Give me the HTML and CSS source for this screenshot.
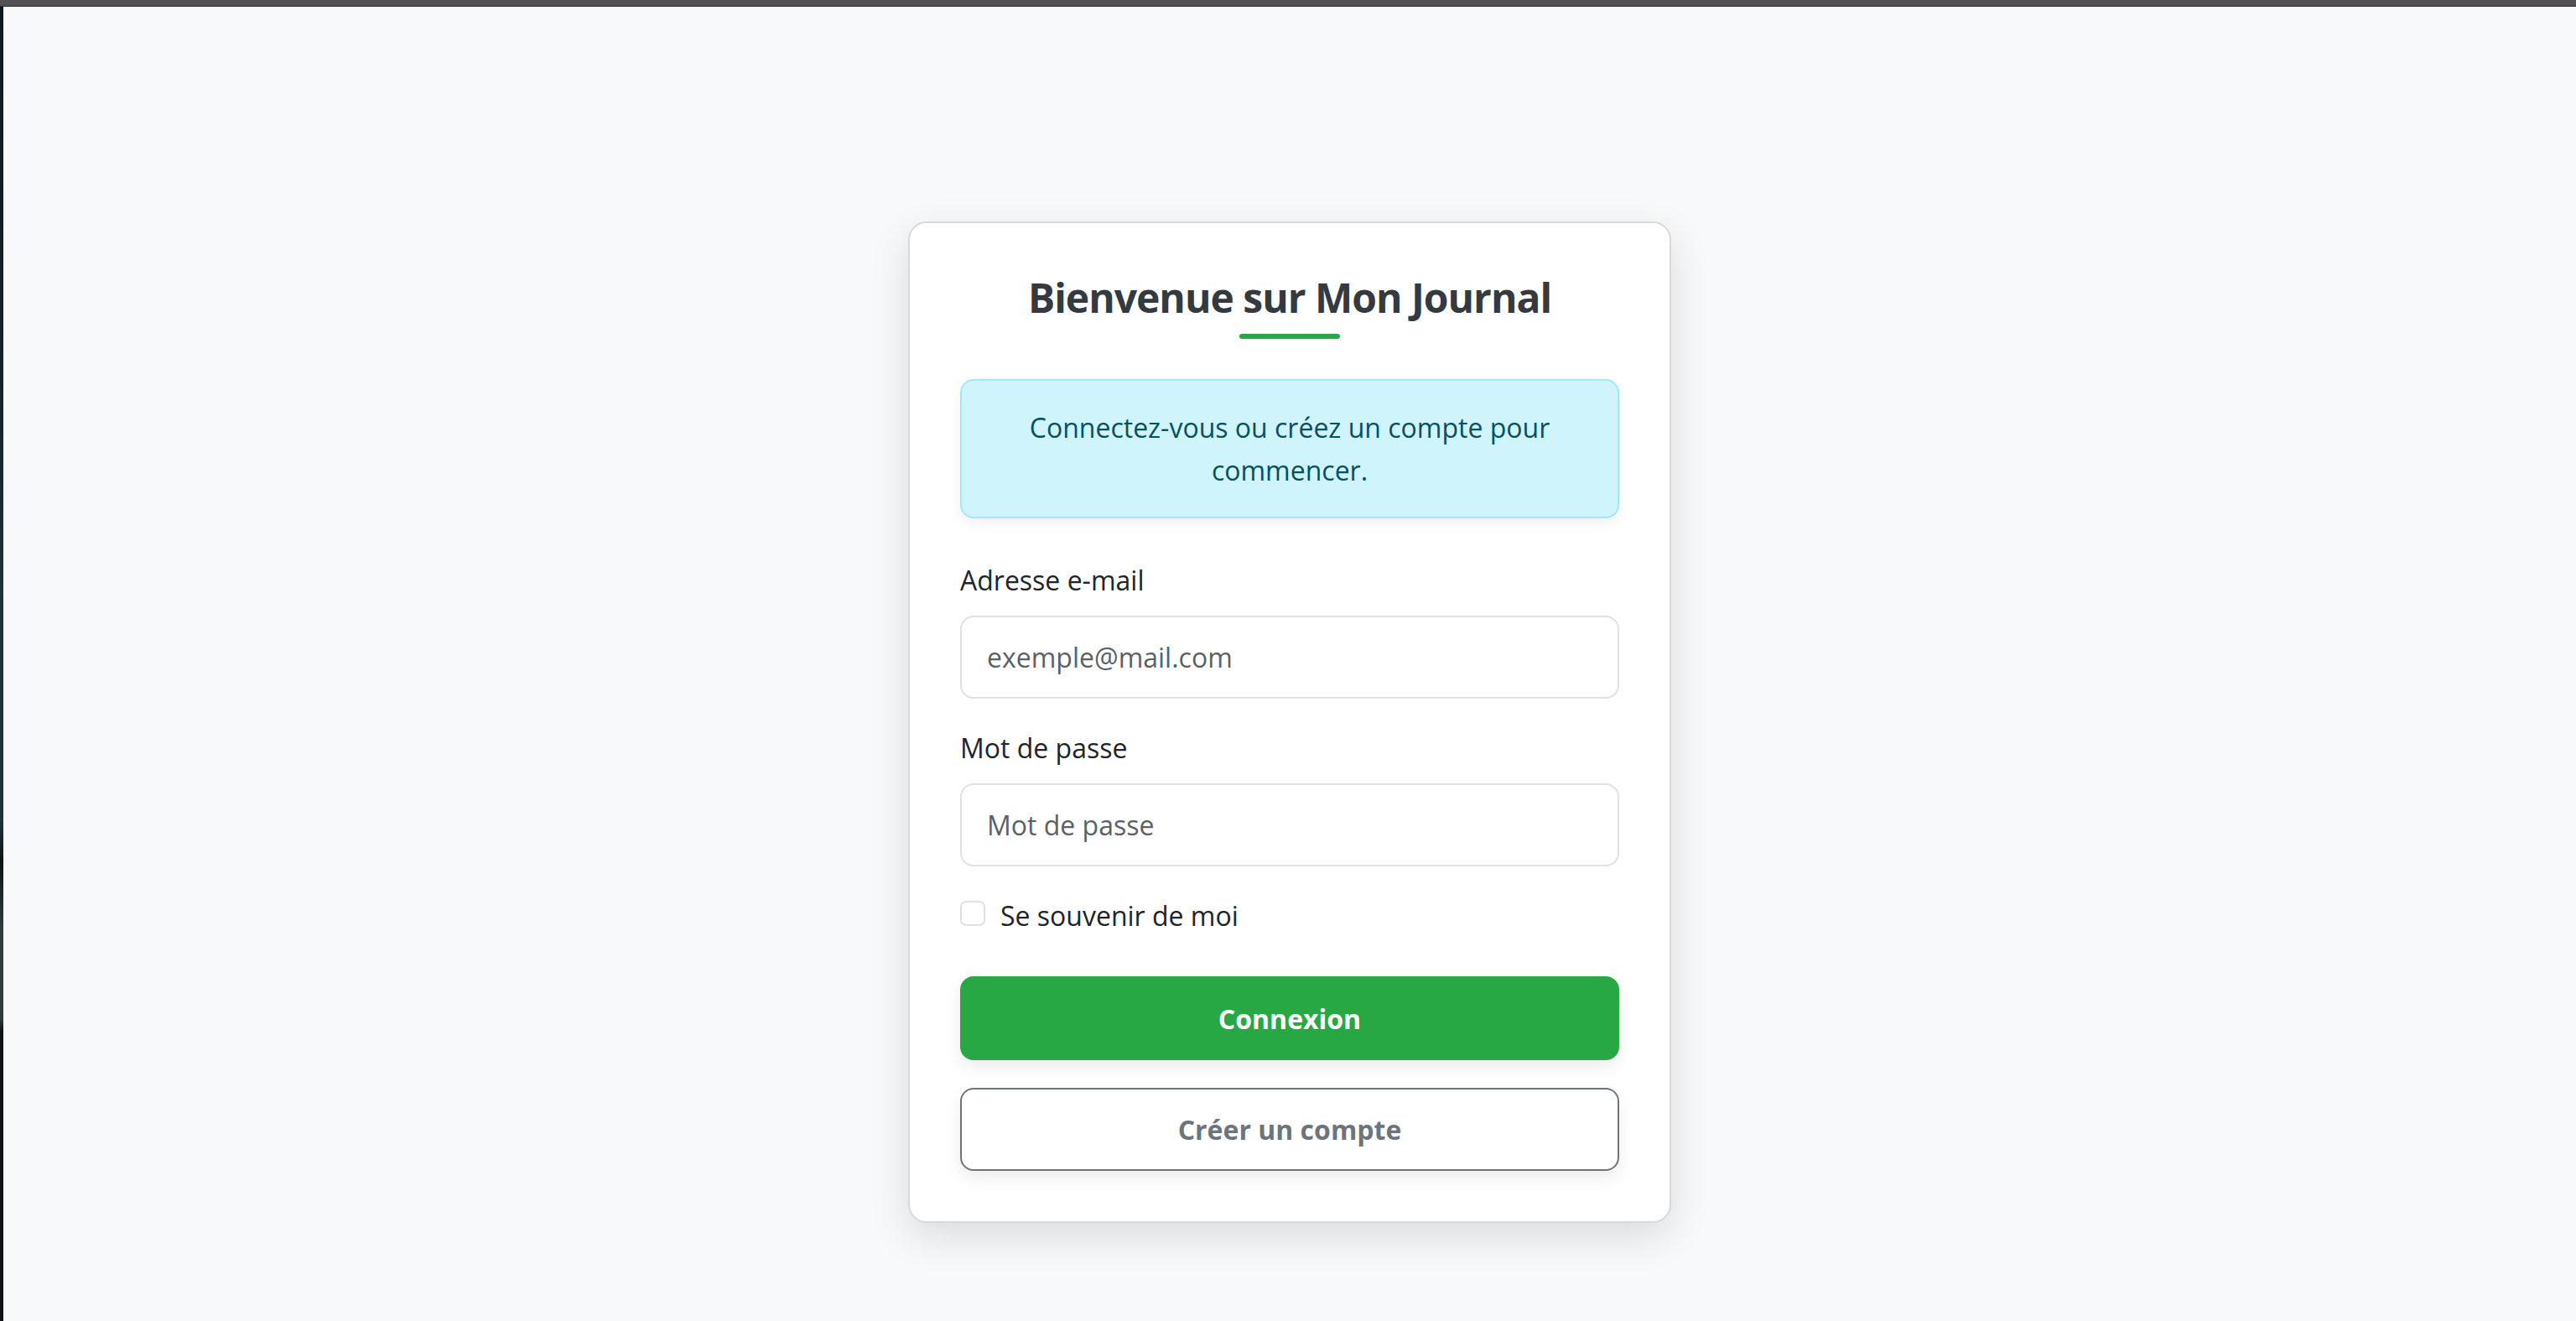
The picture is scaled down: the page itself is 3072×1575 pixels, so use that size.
FILE: index.html
```html
<!DOCTYPE html>
<html lang="fr">
<head>
<meta charset="utf-8">
<title>Mon Journal</title>
<link rel="stylesheet" href="styles.css">
</head>
<body>
<div class="frame">
  <div class="topbar"></div>
  <div class="row">
    <div class="strip"></div>
    <main class="page">
      <section class="card">
        <h1 class="title">Bienvenue sur Mon Journal</h1>
        <div class="title-bar"></div>
        <div class="alert">Connectez-vous ou créez un compte pour commencer.</div>
        <form class="form">
          <div class="group">
            <label class="label" for="email">Adresse e-mail</label>
            <input class="input" id="email" type="email" placeholder="exemple@mail.com">
          </div>
          <div class="group group-last">
            <label class="label" for="pwd">Mot de passe</label>
            <input class="input" id="pwd" type="password" placeholder="Mot de passe">
          </div>
          <label class="check">
            <span class="box"></span>
            <span class="check-text">Se souvenir de moi</span>
          </label>
          <button type="button" class="btn btn-primary">Connexion</button>
          <button type="button" class="btn btn-outline">Créer un compte</button>
        </form>
      </section>
    </main>
  </div>
</div>
</body>
</html>
```

FILE: styles.css
```css
html, body {
  margin: 0;
  padding: 0;
  height: 100%;
}
body {
  font-family: "Open Sans", "Noto Sans", sans-serif;
  color: #212529;
  background: #f8f9fa;
}
.frame {
  display: flex;
  flex-direction: column;
  height: 1575px;
  overflow: hidden;
}
.topbar {
  height: 7px;
  background: #545257;
  border-bottom: 1px solid #2b2b2e;
  flex: none;
}
.row {
  display: flex;
  flex: 1;
}
.strip {
  width: 4px;
  flex: none;
  background: linear-gradient(to bottom, #0f1a20 0%, #13242a 30%, #1e3538 45%, #1e3538 62%, #0c1418 65%, #2e3c3e 70%, #2e3c3e 77%, #0e1216 78%, #0e1216 100%);
}
.page {
  flex: 1;
  display: flex;
  justify-content: center;
  align-items: flex-start;
  padding-top: 256px;
  background: #f8f9fa;
}
.card {
  width: 910px;
  box-sizing: border-box;
  background: #fff;
  border: 2px solid #d9d9d9;
  border-radius: 22px;
  padding: 59px 60px 60px;
  box-shadow: 0 16px 48px rgba(0, 0, 0, 0.12);
  display: flex;
  flex-direction: column;
}
.title {
  margin: 0;
  font-size: 48px;
  line-height: 60px;
  font-weight: 700;
  color: #343a40;
  text-align: center;
  letter-spacing: -1px;
}
.title-bar {
  width: 120px;
  height: 6px;
  border-radius: 3px;
  background: #28a745;
  align-self: center;
  margin-top: 13px;
}
.alert {
  margin-top: 48px;
  background: #cff4fc;
  border: 2px solid #9eeaf9;
  border-radius: 16px;
  color: #055160;
  text-align: center;
  font-size: 32px;
  line-height: 51px;
  padding: 30px 60px;
  box-shadow: 0 6px 16px rgba(0, 0, 0, 0.06);
}
.form {
  display: flex;
  flex-direction: column;
  margin-top: 50px;
}
.group {
  display: flex;
  flex-direction: column;
  margin-bottom: 35px;
}
.group-last {
  margin-bottom: 32px;
}
.label {
  font-size: 32px;
  line-height: 48px;
  color: #212529;
  margin-bottom: 18px;
}
.input {
  font-family: inherit;
  font-size: 32px;
  line-height: 49px;
  height: 99px;
  box-sizing: border-box;
  padding: 23px 30px;
  border: 2px solid #dee2e6;
  border-radius: 16px;
  color: #212529;
  background: #fff;
  outline: none;
}
.input::placeholder {
  color: #5c6166;
  opacity: 1;
}
.check {
  display: flex;
  align-items: center;
  gap: 18px;
  height: 48px;
}
.box {
  width: 30px;
  height: 30px;
  box-sizing: border-box;
  border: 2px solid #dee2e6;
  border-radius: 7px;
  background: #fff;
  flex: none;
}
.check-text {
  font-size: 32px;
  line-height: 48px;
  color: #212529;
  position: relative;
  top: 3px;
}
.btn {
  font-family: inherit;
  font-size: 32px;
  font-weight: 700;
  height: 100px;
  border-radius: 16px;
  cursor: pointer;
  box-sizing: border-box;
  box-shadow: 0 8px 20px rgba(0, 0, 0, 0.08);
}
.btn-primary {
  margin-top: 51px;
  background: #28a745;
  border: none;
  color: #fff;
}
.btn-outline {
  margin-top: 33px;
  background: #fff;
  border: 2px solid #6c757d;
  color: #6c757d;
  height: 99px;
}
```
